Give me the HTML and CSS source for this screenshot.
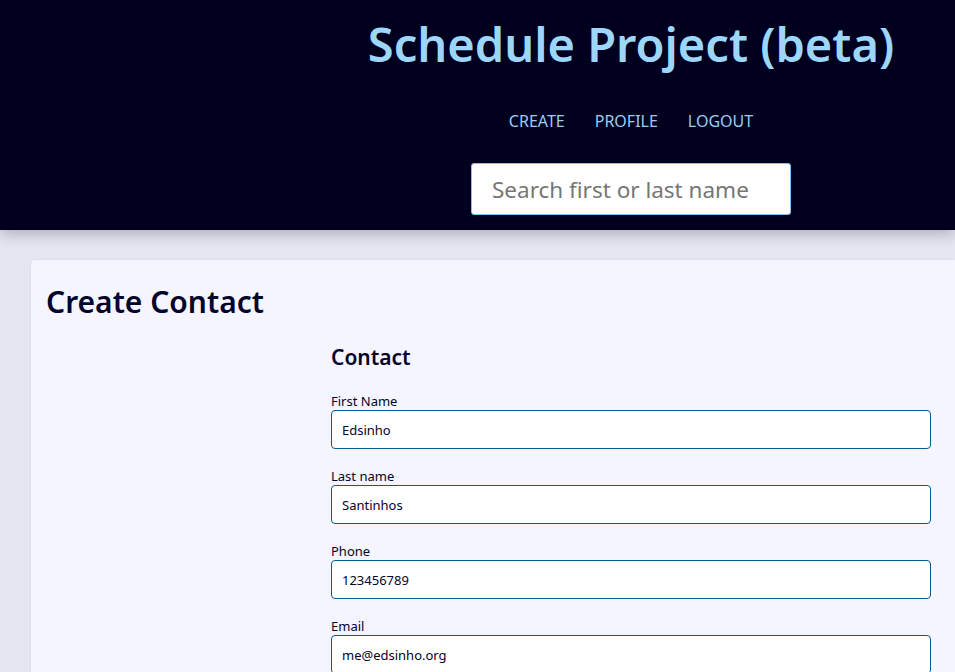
FILE: index.html
```html
<!DOCTYPE html>
<html lang="en">
<head>
<meta charset="utf-8">
<title>Schedule Project (beta)</title>
<link rel="stylesheet" href="styles.css">
</head>
<body>
<header class="topbar">
  <div class="topbar-inner">
    <h1 class="brand">Schedule Project (beta)</h1>
    <nav class="nav">
      <a href="#" class="nav-link">CREATE</a>
      <a href="#" class="nav-link">PROFILE</a>
      <a href="#" class="nav-link">LOGOUT</a>
    </nav>
    <form class="search">
      <input class="search-input" type="text" placeholder="Search first or last name">
    </form>
  </div>
</header>
<main class="main">
  <section class="card">
    <h2 class="card-title">Create Contact</h2>
    <div class="card-body">
      <div class="side"></div>
      <form class="contact-form">
        <h3 class="form-title">Contact</h3>
        <div class="field">
          <label class="label">First Name</label>
          <input class="input" type="text" value="Edsinho">
        </div>
        <div class="field">
          <label class="label">Last name</label>
          <input class="input" type="text" value="Santinhos">
        </div>
        <div class="field">
          <label class="label">Phone</label>
          <input class="input" type="text" value="123456789">
        </div>
        <div class="field">
          <label class="label">Email</label>
          <input class="input" type="text" value="me@edsinho.org">
        </div>
      </form>
    </div>
  </section>
</main>
</body>
</html>
```
FILE: styles.css
```css
* { box-sizing: border-box; }
html, body { margin: 0; padding: 0; }
body {
  background: #e6e6f2;
  font-family: "Noto Sans", "Open Sans", sans-serif;
  color: #04042a;
  overflow: hidden;
  height: 672px;
}
.topbar {
  background: #00001e;
  height: 230px;
  padding-left: 307px;
  box-shadow: 0 4px 14px rgba(0, 0, 30, 0.25);
  position: relative;
  z-index: 1;
}
.topbar-inner {
  display: flex;
  flex-direction: column;
  align-items: center;
}
.brand {
  margin: 12px 0 0;
  font-size: 47px;
  font-weight: 600;
  line-height: 64px;
  color: #9dd6fb;
  letter-spacing: 0;
}
.nav {
  display: flex;
  gap: 30px;
  margin-top: 35px;
}
.nav-link {
  color: #9ccdf0;
  text-decoration: none;
  font-size: 16px;
  line-height: 20px;
}
.search { margin-top: 32px; }
.search-input {
  width: 320px;
  height: 52px;
  border: 1px solid #7cc3f0;
  border-radius: 3px;
  padding: 0 20px;
  font-family: inherit;
  font-size: 22.5px;
  color: #222;
  background: #fff;
}
.search-input::placeholder { color: #767676; }
.main { padding: 30px 0 0 31px; }
.card {
  background: #f4f5fe;
  border-radius: 4px 0 0 0;
  box-shadow: 0 0 3px rgba(0, 0, 40, 0.08);
  padding: 22px 24px 40px 15px;
  min-height: 500px;
}
.card-title {
  margin: 0;
  font-size: 30px;
  font-weight: 600;
  line-height: 40px;
  color: #04042a;
}
.card-body {
  display: grid;
  grid-template-columns: 285px 600px;
  margin-top: 20px;
}
.form-title {
  margin: 0 0 20px;
  font-size: 21px;
  font-weight: 600;
  line-height: 30px;
}
.field {
  display: flex;
  flex-direction: column;
  margin-bottom: 18px;
}
.label {
  font-size: 13px;
  line-height: 18px;
}
.input {
  height: 39px;
  border: 1px solid #0b5a8f;
  border-radius: 4px;
  background: #fff;
  padding: 0 10px;
  font-family: inherit;
  font-size: 13px;
  color: #04042a;
}
```
